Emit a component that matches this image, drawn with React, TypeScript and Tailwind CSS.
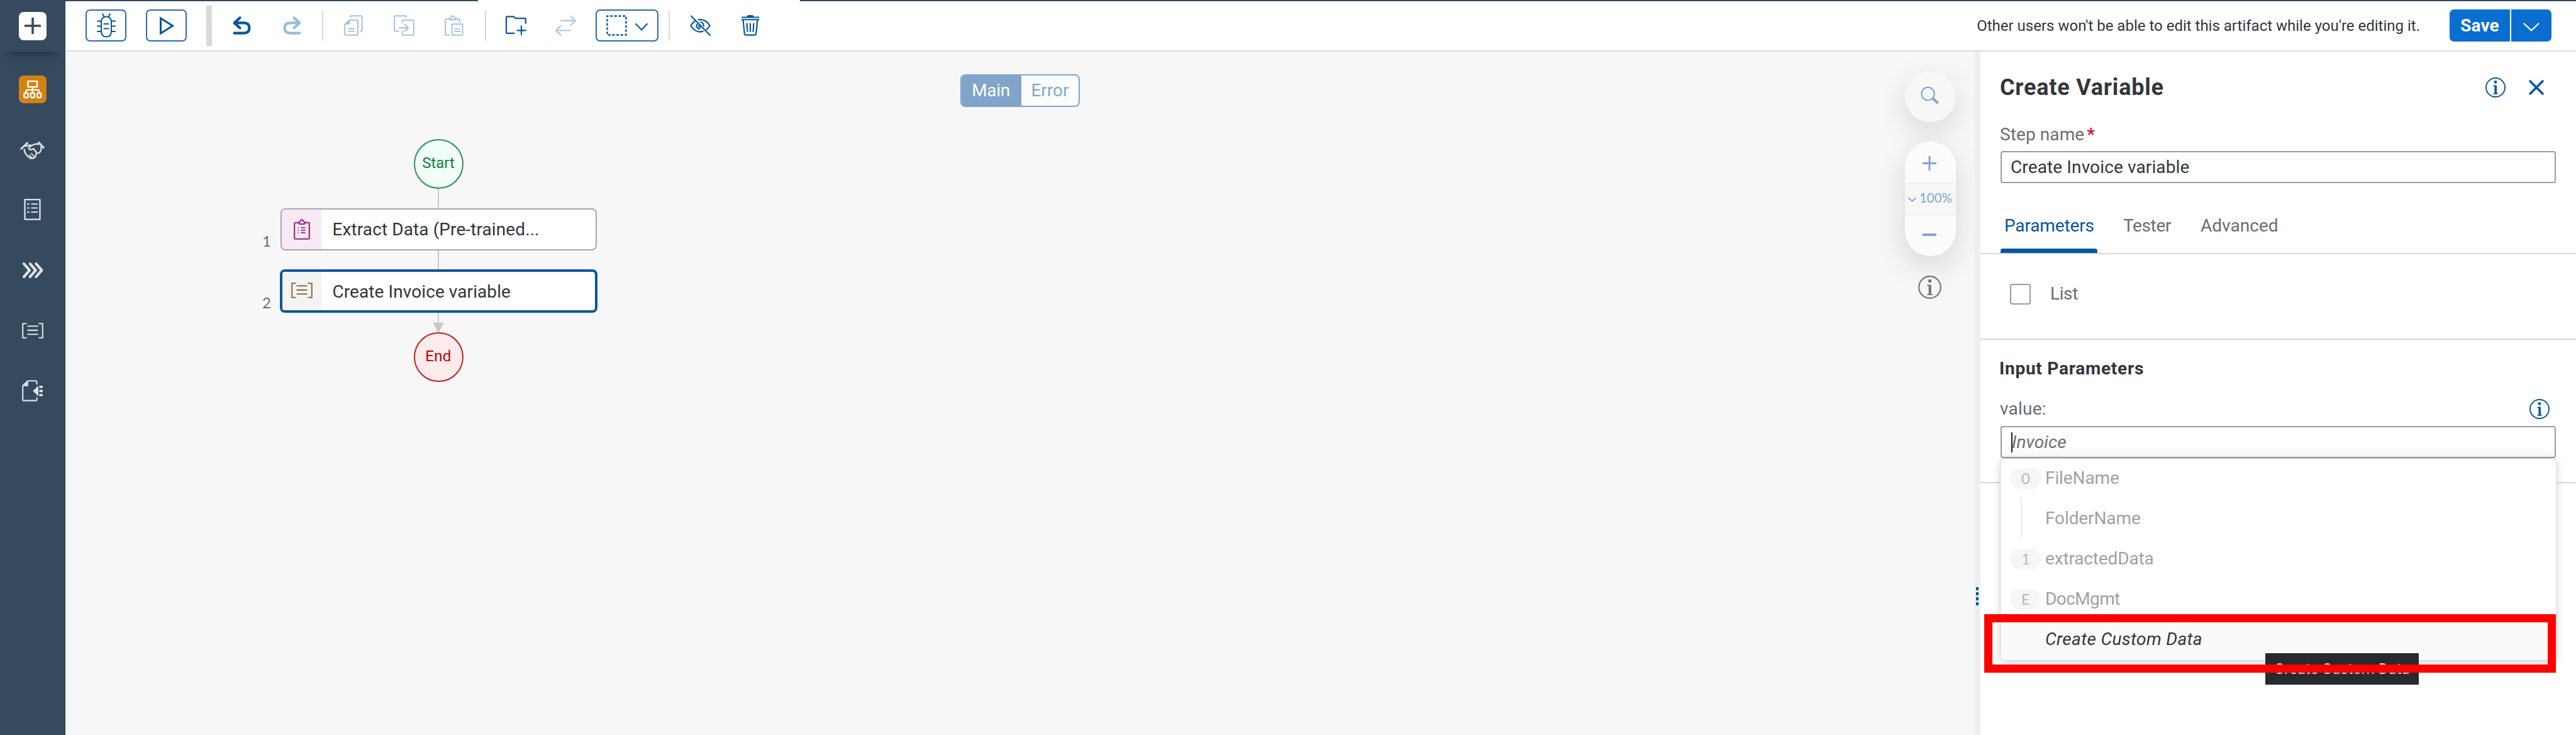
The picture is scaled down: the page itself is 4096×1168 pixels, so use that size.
import React from "react";

type IconProps = {
  w: number;
  h: number;
  sw?: number;
  className?: string;
  children: React.ReactNode;
};

/** Stroked icon drawn in its own pixel grid. */
function Icon({ w, h, sw = 2, className = "", children }: IconProps) {
  return (
    <svg
      width={w}
      height={h}
      viewBox={`0 0 ${w} ${h}`}
      fill="none"
      stroke="currentColor"
      strokeWidth={sw}
      strokeLinecap="round"
      strokeLinejoin="round"
      className={`block shrink-0 overflow-visible ${className}`}
    >
      {children}
    </svg>
  );
}

function InfoIcon({ w = 32, h = 32 }: { w?: number; h?: number }) {
  return (
    <svg width={w} height={h} viewBox="0 0 32 32" fill="none" className="block shrink-0">
      <circle cx="16" cy="16" r="15" stroke="currentColor" strokeWidth="1.9" />
      <circle cx="16" cy="7.4" r="2.4" fill="currentColor" />
      <path d="M12.4 12.6H18V25.2H20V26.8H12.4V25.2H14.4V14.2H12.4Z" fill="currentColor" />
    </svg>
  );
}

function BracketsIcon({ w, h }: { w: number; h: number }) {
  return (
    <svg width={w} height={h} viewBox="0 0 34 25" fill="none" stroke="currentColor" strokeWidth="2.1" className="block shrink-0">
      <path d="M7.5 1.2H1.2V23.8H7.5M26.5 1.2H32.8V23.8H26.5M8.5 5.2H25.5M8.5 11.9H25.5M8.5 18.2H25.5" />
    </svg>
  );
}

function Sidebar() {
  return (
    <aside className="flex h-full w-[104px] shrink-0 flex-col items-center border-r border-[#2a3e53] bg-[#354a5f] text-[#dde1e4]">
      <div className="flex h-[82px] w-full shrink-0 items-center justify-center shadow-[0_14px_16px_-12px_rgba(20,35,50,0.75)]">
        <div className="flex h-[45px] w-[44px] items-center justify-center rounded-[8px] bg-white text-[#354a5f]">
          <Icon w={28} h={28} sw={3.6}>
            <path d="M14 1V27M1 14H27" strokeLinecap="butt" />
          </Icon>
        </div>
      </div>
      <div className="mt-[38px] flex h-[44px] w-[44px] items-center justify-center rounded-[8px] bg-[#d58113] text-white">
        <Icon w={30} h={28} sw={2.3}>
          <path d="M7.5 1.2H22V10.2H7.5ZM14.8 10.5V20M4.2 20V17.5Q4.2 14.8 7 14.8H22.6Q25.4 14.8 25.4 17.5V20" />
          <rect x="1.4" y="20" width="6.2" height="7" rx="1" />
          <rect x="11.6" y="20" width="6.2" height="7" rx="1" />
          <rect x="22" y="20" width="6.2" height="7" rx="1" />
        </Icon>
      </div>
      <div className="mt-[61px] flex h-[28px] items-center">
        <Icon w={39} h={28} sw={2.4}>
          <path d="M1.5 11.5L11.5 2M29.5 1.2L37.5 9.8" strokeWidth="2.8" />
          <path d="M6.5 12.5Q6.8 19 13.5 24.5Q17.5 28 21.5 26.2Q25.5 24.5 25.2 19.5" />
          <path d="M9 7.5Q12.5 4.8 18.5 6.2Q24.5 2.6 29.5 4.2M18.5 6.2L14.2 9.2Q13.6 13 17 12.8L21.5 11.4L27 18.5Q31.5 18.6 32.6 14.5Q34.6 12.5 33 8.5" />
          <path d="M14.5 21.5L18 25M18 19L22.2 23.8" strokeWidth="1.8" />
        </Icon>
      </div>
      <div className="mt-[63px]">
        <Icon w={27} h={34} sw={2.3}>
          <path d="M1.5 1.2H25.5V32.6H1.5Z" />
          <path d="M5 8.2H8.5M11.5 8.2H22M5 14.6H8.5M11.5 14.6H22M5 21H8.5M11.5 21H22" strokeWidth="2" strokeLinecap="butt" />
        </Icon>
      </div>
      <div className="mt-[67px]">
        <Icon w={34} h={25} sw={4.2}>
          <path d="M3 2.2L12 12.5L3 22.8M12.8 2.2L21.8 12.5L12.8 22.8M22.4 2.2L31.4 12.5L22.4 22.8" />
        </Icon>
      </div>
      <div className="mt-[71px]">
        <BracketsIcon w={34} h={25} />
      </div>
      <div className="mt-[66px]">
        <Icon w={34} h={34} sw={2.1}>
          <path d="M23.5 6.5V2.8Q23.5 1.2 22 1.2H9.2L1.2 9V31Q1.2 32.6 2.8 32.6H22Q23.5 32.6 23.5 31V28.5" />
          <path d="M9.8 1.2V9.8H1.2Z" fill="currentColor" stroke="none" />
          <path d="M17.2 17.3L26 9V25.8Z" fill="currentColor" stroke="none" />
          <path d="M27.5 9H33V12.6H27.5ZM27.5 15.4H33V19.2H27.5ZM27.5 22H33V25.6H27.5Z" fill="currentColor" stroke="none" />
        </Icon>
      </div>
    </aside>
  );
}

function Divider() {
  return <div className="h-[49px] w-[2px] shrink-0 bg-[#d9d9d9]" />;
}

function Toolbar() {
  return (
    <header className="flex h-[82px] shrink-0 flex-col border-b-2 border-[#dcdcdc] bg-white">
      <div className="flex h-[2px]">
        <div className="w-[656px] bg-[#354a5f]" />
        <div className="w-[512px]" />
        <div className="flex-1 bg-[#354a5f]" />
      </div>
      <div className="flex h-[79px] items-center text-[#0854a0]">
        <div className="ml-[32px] flex h-[51px] w-[65px] items-center justify-center rounded-[7px] border-2 border-[#2a6bb0]">
          <Icon w={30} h={39} sw={2}>
            <path d="M9 1L11.5 5.5M21 1L18.5 5.5" />
            <path d="M7 14Q7 5.5 15 5.5Q23 5.5 23 14V28Q23 37.5 15 37.5Q7 37.5 7 28Z" />
            <path d="M1 12.5H6M1 20.5H6M1 29H6M24 12.5H29M24 20.5H29M24 29H29M11.5 17H18.5M11.5 24.5H18.5" />
          </Icon>
        </div>
        <div className="ml-[31px] flex h-[51px] w-[65px] items-center justify-center rounded-[7px] border-2 border-[#2a6bb0]">
          <Icon w={22} h={28} sw={3}>
            <path d="M1.5 2L20.5 14L1.5 26Z" strokeLinejoin="miter" />
          </Icon>
        </div>
        <div className="ml-[31px] h-[64px] w-[9px] bg-[#d9d9d9]" />
        <Icon w={29} h={29} sw={4.2} className="ml-[33px]">
          <path d="M11.5 2.2L2.6 10.4L11.5 18.5M3 10.4H18Q26.4 10.4 26.4 18.6Q26.4 26.6 18 26.6H2.6" />
        </Icon>
        <Icon w={29} h={29} sw={4.2} className="ml-[51px] text-[#9bbbdc]">
          <path d="M17.5 2.2L26.4 10.4L17.5 18.5M26 10.4H11Q2.6 10.4 2.6 18.6Q2.6 26.6 11 26.6H26.4" />
        </Icon>
        <div className="ml-[33px]">
          <Divider />
        </div>
        <Icon w={30} h={33} sw={2} className="ml-[33px] text-[#a5c2de]">
          <path d="M10 3Q10 1.2 12 1.2H27.5Q28.7 1.2 28.7 2.4V24Q28.7 25.6 26 25.6" />
          <path d="M1.2 15L8.5 8H20.5Q22 8 22 9.4V30.4Q22 31.8 20.5 31.8H2.6Q1.2 31.8 1.2 30.4Z" />
          <path d="M8.5 7.5V14.5H1.2Z" fill="currentColor" strokeWidth="1" />
          <path d="M7 21.5H16M7 25.5H16" strokeWidth="1.8" />
        </Icon>
        <Icon w={33} h={33} sw={2} className="ml-[49px] text-[#a5c2de]">
          <path d="M20 3.5V2.4Q20 1.2 18.8 1.2H2.4Q1.2 1.2 1.2 2.4V24.4Q1.2 25.6 2.4 25.6H7.5" />
          <path d="M13.8 12V9.2Q13.8 8 15 8H30.6Q31.8 8 31.8 9.2V30.6Q31.8 31.8 30.6 31.8H15Q13.8 31.8 13.8 30.6V26" />
          <path d="M9 20.3H23.5M17.5 15L23.5 20.3L17.5 25.6" />
        </Icon>
        <Icon w={30} h={33} sw={2} className="ml-[48px] text-[#a5c2de]">
          <path d="M7 31.8H2.5Q1.2 31.8 1.2 30.5V7.5Q1.2 6.2 2.5 6.2H8.5M17 6.2H22.5Q24 6.2 24 7.6V10.5" />
          <path d="M7.5 7.2Q7.5 5 10 4.2Q11 1.2 12.8 1.2Q14.6 1.2 15.6 4.2Q18 5 18 7.2Z" />
          <rect x="11.6" y="14.2" width="17" height="17.6" rx="1" />
          <path d="M16 22.2H24.5M16 26H24.5" strokeWidth="1.8" />
        </Icon>
        <div className="ml-[34px]">
          <Divider />
        </div>
        <Icon w={34} h={31} sw={2.2} className="ml-[30px]">
          <path d="M14.5 27.8H3Q1.8 27.8 2 26.5V2.5Q2 1.4 3 1.4H13.5L17 4.2H31.8Q32.8 4.2 32.8 5.2V12" />
          <path d="M26 16.5V30M19.5 23.3H32.8" />
        </Icon>
        <Icon w={33} h={33} sw={2.4} className="ml-[46px] text-[#b4cbe3]">
          <path d="M9.5 8.8H31.5M24.5 1.6L31.8 8.8L24.5 16M23.5 24.4H1.5M8.5 17.2L1.2 24.4L8.5 31.6" />
        </Icon>
        <div className="ml-[31px] flex h-[51px] w-[100px] items-center rounded-[7px] border-2 border-[#2a6bb0]">
          <svg width="33" height="33" viewBox="0 0 33 33" className="ml-[15px] block shrink-0">
            <rect x="1.5" y="1.5" width="30" height="30" fill="none" stroke="currentColor" strokeWidth="2.4" strokeDasharray="4 2.667" strokeDashoffset="2" />
          </svg>
          <Icon w={20} h={12} sw={2} className="mt-[4px] ml-[13px]">
            <path d="M1 1L10 10.5L19 1" />
          </Icon>
        </div>
        <div className="ml-[16px]">
          <Divider />
        </div>
        <Icon w={33} h={33} sw={2.2} className="ml-[32px]">
          <path d="M2 1.5L32 32" />
          <path d="M8.5 9.2Q3.5 12.5 1.3 17Q7.5 26.3 16 26.6Q18.6 26.6 20.8 25.8M13.5 7.3Q25 5.5 31.7 17Q29.5 20.5 26.5 22.8" />
          <path d="M11.2 14.5Q9.5 21 15.5 22M17.5 11Q22 12.5 21.8 17.5M14.8 15.5Q13.5 18.5 16.5 19.5" />
        </Icon>
        <Icon w={30} h={33} sw={2.2} className="ml-[48px]">
          <path d="M1 3.4H29M1 7.2H29" strokeWidth="2" strokeLinecap="butt" />
          <path d="M10.5 2.5Q10.5 1 12.5 1H17.5Q19.5 1 19.5 2.5Z" fill="currentColor" />
          <path d="M3.5 7.5L5.8 29.5Q6 31.6 8 31.6H22Q24 31.6 24.2 29.5L26.5 7.5" />
          <path d="M9.5 13.5L10.5 26M15 13.5V26M20.5 13.5L19.5 26" />
        </Icon>
        <p className="ml-auto pt-px text-[24px] whitespace-nowrap text-[#32363a]">
          Other users won't be able to edit this artifact while you're editing it.
        </p>
        <div className="mr-[39px] ml-[47px] flex h-[51px] w-[162px] rounded-[7px] bg-[#0a6ed1] text-white">
          <div className="flex w-[98px] items-center justify-center border-r-2 border-white text-[28px] font-bold tracking-[0.1px]">Save</div>
          <div className="flex flex-1 items-center justify-center pt-[4px]">
            <Icon w={26} h={14} sw={2.4}>
              <path d="M1.5 1.5L13 12.5L24.5 1.5" />
            </Icon>
          </div>
        </div>
      </div>
    </header>
  );
}

function Canvas() {
  return (
    <main className="relative h-full min-w-0 flex-1 overflow-hidden bg-[#f7f7f7]">
      {/* flow diagram */}
      <svg className="absolute top-0 left-0" width="900" height="560" fill="none">
        <path d="M593 217V248M593 315V346M593 413V432" stroke="#c8c8c8" strokeWidth="2" />
        <path d="M584.5 430.5H601.5L593 447.5Z" fill="#c8c8c8" />
      </svg>
      <div className="absolute top-[139px] left-[553.5px] flex h-[79px] w-[79px] items-center justify-center rounded-full border-2 border-[#2b8f54] bg-[#f1fdf6] pb-[3px] text-[24px] text-[#107e3e]">
        Start
      </div>
      <div className="absolute top-[285px] left-[313px] font-[Lato] text-[24px] leading-[32px] text-[#6a6d70]">1</div>
      <div className="absolute top-[249px] left-[341.5px] flex h-[67px] w-[503px] overflow-hidden rounded-[8px] border-2 border-[#a3a9b0] bg-white">
        <div className="flex w-[63px] items-center bg-[#f9e9f5] pl-[19px] text-[#8f2a80]">
          <Icon w={26} h={33} sw={2.1}>
            <path d="M7.5 5.8H2.6Q1.2 5.8 1.2 7.2V30.4Q1.2 31.8 2.6 31.8H23.4Q24.8 31.8 24.8 30.4V7.2Q24.8 5.8 23.4 5.8H18.5" />
            <path d="M7.8 6.5Q8 4.8 10.3 4Q11 1.2 13 1.2Q15 1.2 15.7 4Q18 4.8 18.2 6.5L16.8 8H9.2Z" />
            <path d="M6.8 13.8H8.2M11.5 13.8H18.5M6.8 17.8H8.2M11.5 17.8H18.5M6.8 21.8H8.2M11.5 21.8H18.5" strokeWidth="1.8" strokeLinecap="butt" />
          </Icon>
        </div>
        <div className="flex items-center pl-[18px] text-[28px] tracking-[0.1px] text-[#32363a]">Extract Data (Pre-trained...</div>
      </div>
      <div className="absolute top-[383px] left-[313px] font-[Lato] text-[24px] leading-[32px] text-[#6a6d70]">2</div>
      <div className="absolute top-[346px] left-[340.5px] flex h-[69px] w-[505px] overflow-hidden rounded-[8px] border-4 border-[#0854a0] bg-white">
        <div className="flex w-[62px] items-center bg-[#f3f3f3] pb-[2px] pl-[14px] text-[#8a7045]">
          <BracketsIcon w={34} h={25} />
        </div>
        <div className="flex items-center pt-[2px] pl-[18px] text-[28px] tracking-[0.08px] text-[#32363a]">Create Invoice variable</div>
      </div>
      <div className="absolute top-[445.5px] left-[553.5px] flex h-[79px] w-[79px] items-center justify-center rounded-full border-2 border-[#c81e1e] bg-[#ffebeb] pb-[2px] text-[24px] tracking-[0.3px] text-[#bb0000]">
        End
      </div>

      {/* main / error switch */}
      <div className="absolute top-[36px] left-[1423px] flex h-[52px] w-[190px] overflow-hidden rounded-[8px] border-2 border-[#7fa5cd] bg-[#fcfcfc] pb-px text-[28px]">
        <div className="-mb-px flex w-[95px] items-center justify-center bg-[#80a4ca] pr-[2px] pb-px tracking-[-0.3px] text-white">Main</div>
        <div className="flex flex-1 items-center justify-center text-[#83a9d0]">Error</div>
      </div>

      {/* zoom controls */}
      <div className="absolute top-[31px] left-[2924.5px] flex w-[81px] flex-col items-center text-[#7fa5cd]">
        <div className="flex h-[81px] w-[81px] items-center justify-center rounded-full bg-[#f7f7f7] pr-[2px] pb-[4px] shadow-[0_16px_44px_rgba(85,105,125,0.2)]">
          <Icon w={29} h={28} sw={2}>
            <circle cx="11.5" cy="11" r="10.2" />
            <path d="M20 19L26.5 25" strokeWidth="4" />
          </Icon>
        </div>
        <div className="mt-[31px] flex h-[182px] w-[81px] flex-col overflow-hidden rounded-full bg-[#fcfcfc]">
          <div className="flex h-[65px] items-center justify-center pt-[4px] pr-[2px]">
            <Icon w={22} h={23} sw={3}>
              <path d="M11 0V23M0 11.5H22" strokeLinecap="butt" />
            </Icon>
          </div>
          <div className="flex h-[53px] items-center justify-center gap-[5px] border-y-2 border-[#f0f0f0] bg-[#f7f7f7] pb-[4px]">
            <Icon w={13} h={7} sw={2} className="mt-[5px]">
              <path d="M1 1L6.5 5.5L12 1" />
            </Icon>
            <span className="font-[Lato] text-[20.5px]">100%</span>
          </div>
          <div className="flex flex-1 items-start justify-center pt-[28px] pr-[2px]">
            <div className="h-[4px] w-[22px] bg-[#7fa5cd]" />
          </div>
        </div>
        <div className="absolute top-[112px] -z-0 h-[182px] w-[81px] rounded-full shadow-[0_16px_44px_rgba(85,105,125,0.22)]" />
        <div className="mt-[31px] mr-[2px] text-[#74777a]">
          <InfoIcon w={37} h={37} />
        </div>
      </div>
    </main>
  );
}

function Option({ badge, rule, children }: { badge?: string; rule?: boolean; children: React.ReactNode }) {
  return (
    <li className="flex h-[64px] items-center pb-[2px] pl-[15px] text-[28px] text-[#a0a1a3]">
      <div className="flex w-[56px] shrink-0">
        {badge && (
          <span className="flex h-[33px] w-[50px] items-center justify-center rounded-full bg-[#f5f6f8] font-[Lato] text-[24px] text-[#b5b8bb]">
            {badge}
          </span>
        )}
        {rule && <span className="ml-[17px] h-[64px] w-[2px] bg-[#ececec]" />}
      </div>
      {children}
    </li>
  );
}

function Panel() {
  return (
    <section className="h-full w-[947px] shrink-0 bg-white">
      <div className="flex h-[114px] items-center pr-[51px] pl-[31px]">
        <h1 className="text-[36px] font-bold tracking-[0.8px] text-[#32363a]">Create Variable</h1>
        <div className="ml-auto flex items-center gap-[37px] text-[#0854a0]">
          <InfoIcon />
          <Icon w={24} h={24} sw={3.6}>
            <path d="M2 2L22 22M22 2L2 22" />
          </Icon>
        </div>
      </div>
      <div className="px-[32px]">
        <label className="-ml-px flex h-[36px] items-center gap-[4px] text-[28px] tracking-[0.1px] text-[#6a6d70]">
          Step name<span className="font-bold text-[#cc1c2b]">*</span>
        </label>
        <div className="mt-[8px] flex h-[51px] items-center rounded-[4px] border-2 border-[#959ca5] pl-[14px] text-[28px] tracking-[0.12px] text-[#32363a]">
          Create Invoice variable
        </div>
      </div>
      <div className="flex h-[113px] items-end gap-[34px] border-b-2 border-[#d9d9d9] pl-[32px] text-[28px] leading-[37px] text-[#6a6d70]">
        <div className="w-[154px] text-[#0854a0]">
          <div className="pb-[18px] pl-[6px] tracking-[-0.15px]">Parameters</div>
          <div className="h-[7px] rounded-t-[4px] bg-[#0854a0]" />
        </div>
        <div className="px-[7px] pb-[25px] tracking-[-0.35px]">Tester</div>
        <div className="px-[6px] pb-[25px]">Advanced</div>
      </div>
      <div className="flex h-[136px] items-center gap-[31px] border-b-2 border-[#d9d9d9] pb-[8px] pl-[47px]">
        <div className="h-[33px] w-[33px] rounded-[4px] border-2 border-[#959ca5]" />
        <span className="text-[28px] tracking-[-0.4px] text-[#6a6d70]">List</span>
      </div>
      <div className="border-b-2 border-[#d9d9d9] px-[32px] pb-[38px]">
        <h2 className="-ml-[2px] pt-[27px] text-[28px] leading-[37px] font-bold tracking-[0.75px] text-[#32363a]">Input Parameters</h2>
        <div className="mt-[28px] -ml-px flex h-[36px] items-center justify-between pr-[10px] text-[28px] tracking-[0.2px] text-[#6a6d70]">
          value:
          <span className="text-[#0854a0]">
            <InfoIcon />
          </span>
        </div>
        <div className="relative mt-[9px]">
          <div className="flex h-[51px] items-center rounded-[4px] border-2 border-[#959ca5] bg-gradient-to-b from-white from-60% to-[#f8f8f8] pl-[16px] text-[28px] text-[#6a6d70] italic">
            <span className="-ml-px h-[32px] w-[2px] bg-[#1d2023]" />
            <span className="-ml-px tracking-[0.1px]">Invoice</span>
          </div>
          {/* suggestions */}
          <ul className="absolute top-[51px] -left-px h-[322px] w-[886px] overflow-hidden rounded-[8px] border border-[#d0d0d0] bg-white shadow-[0_4px_14px_rgba(50,54,58,0.18)]">
            <Option badge="0"><span className="tracking-[-0.1px]">FileName</span></Option>
            <Option rule><span className="tracking-[-0.1px]">FolderName</span></Option>
            <Option badge="1"><span className="tracking-[-0.15px]">extractedData</span></Option>
            <Option badge="E"><span className="tracking-[-0.6px]">DocMgmt</span></Option>
            <li className="flex h-[66px] items-center bg-[#fafafa] pb-[4px] pl-[71px] text-[28px] tracking-[0.35px] text-[#32363a] italic">Create Custom Data</li>
          </ul>
        </div>
      </div>
    </section>
  );
}

export default function App() {
  return (
    <div className="relative flex h-[1168px] w-[4096px] overflow-hidden bg-white font-[Roboto,sans-serif]">
      <Sidebar />
      <div className="flex min-w-0 flex-1 flex-col">
        <Toolbar />
        <div className="flex min-h-0 flex-1">
          <Canvas />
          <div className="relative w-[9px] shrink-0 bg-[#eceef0]">
            <div className="absolute top-[851px] left-[2px] flex flex-col gap-[3px]">
              <span className="h-[5px] w-[4px] bg-[#0854a0]" />
              <span className="h-[5px] w-[4px] bg-[#0854a0]" />
              <span className="h-[5px] w-[4px] bg-[#0854a0]" />
              <span className="h-[5px] w-[4px] bg-[#0854a0]" />
            </div>
          </div>
          <Panel />
        </div>
      </div>
      {/* tooltip with the highlight frame over it */}
      <div className="absolute top-[1038px] left-[3602px] flex h-[50px] w-[244px] items-center justify-center bg-[#292a2e] text-[24px] text-[#d5d6d8]">
        Create Custom Data
      </div>
      <div className="absolute top-[976px] left-[3155px] h-[93px] w-[909px] border-[13px] border-[#ff0000]" />
    </div>
  );
}
